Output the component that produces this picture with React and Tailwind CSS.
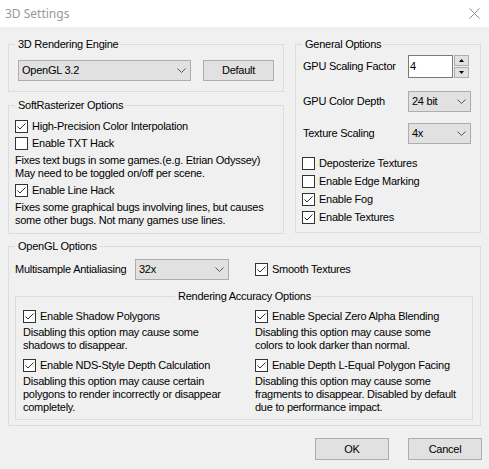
import React from 'react'

const font = { fontFamily: '"Liberation Sans", Arial, sans-serif' }

function Group({ label, center, className = '', children }) {
  return (
    <div className={`relative border border-[#dcdcdc] ${className}`}>
      <span
        className={`absolute -top-[7px] bg-[#f0f0f0] pl-[3px] pr-[2px] leading-[13px] whitespace-nowrap ${
          center ? 'left-1/2 -translate-x-1/2' : 'left-[6px]'
        }`}
      >
        {label}
      </span>
      {children}
    </div>
  )
}

function Check({ checked, label, h = 'h-[17px]' }) {
  return (
    <div className={`flex ${h} items-center`}>
      <span className="flex h-[13px] w-[13px] shrink-0 items-center justify-center border border-[#333333] bg-white">
        {checked && (
          <svg width="11" height="11" viewBox="0 0 11 11">
            <path d="M1.5 5.5 L4 8 L9.5 2.5" fill="none" stroke="#333333" strokeWidth="1" />
          </svg>
        )}
      </span>
      <span className="ml-[4px] whitespace-nowrap">{label}</span>
    </div>
  )
}

function Select({ value, className = '' }) {
  return (
    <div className={`flex h-[21px] items-center justify-between border border-[#adadad] bg-[#e1e1e1] pl-[3px] pr-[4px] ${className}`}>
      <span>{value}</span>
      <svg width="9" height="5" viewBox="0 0 9 5">
        <path d="M0.5 0.5 L4.5 4.5 L8.5 0.5" fill="none" stroke="#555555" strokeWidth="1" />
      </svg>
    </div>
  )
}

function Button({ children, className = '' }) {
  return (
    <div className={`flex items-center justify-center border border-[#adadad] bg-[#e1e1e1] ${className}`}>
      {children}
    </div>
  )
}

function Desc({ lines, className = '' }) {
  return (
    <div className={`leading-[13px] ${className}`}>
      {lines.map((l) => (
        <div key={l} className="whitespace-nowrap">{l}</div>
      ))}
    </div>
  )
}

export default function App() {
  return (
    <div className="h-[469px] w-[489px] overflow-hidden bg-[#f0f0f0] text-[11px] tracking-[-0.25px] text-black" style={font}>
      {/* title bar */}
      <div className="flex h-[27px] items-center bg-white pl-[5px]">
        <span className="text-[12px] tracking-normal text-[#999999]" style={{ fontFamily: '"Noto Sans", sans-serif' }}>
          3D Settings
        </span>
        <svg className="ml-auto mr-[9px]" width="11" height="11" viewBox="0 0 11 11">
          <path d="M0.5 0.5 L10.5 10.5 M10.5 0.5 L0.5 10.5" stroke="#8a8a8a" strokeWidth="1" />
        </svg>
      </div>

      <div className="pl-[8px] pt-[17px]">
        <div className="flex items-start">
          {/* left column */}
          <div className="w-[276px]">
            <Group label="3D Rendering Engine" className="h-[48px]">
              <div className="flex pl-[9px] pt-[15px]">
                <Select value="OpenGL 3.2" className="w-[173px]" />
                <Button className="ml-[12px] h-[21px] w-[71px]">Default</Button>
              </div>
            </Group>

            <Group label="SoftRasterizer Options" className="mt-[13px] h-[129px]">
              <div className="pl-[6px] pt-[12px]">
                <Check checked label="High-Precision Color Interpolation" />
                <Check label="Enable TXT Hack" />
                <Desc
                  className="py-[2px]"
                  lines={['Fixes text bugs in some games.(e.g. Etrian Odyssey)', 'May need to be toggled on/off per scene.']}
                />
                <Check checked label="Enable Line Hack" />
                <Desc
                  className="pt-[2px]"
                  lines={['Fixes some graphical bugs involving lines, but causes', 'some other bugs. Not many games use lines.']}
                />
              </div>
            </Group>
          </div>

          {/* right column */}
          <Group label="General Options" className="ml-[11px] h-[189px] w-[186px]">
            <div className="pl-[6px] pt-[10px]">
              <div className="flex h-[23px] items-center">
                <span className="w-[106px] pl-[1px]">GPU Scaling Factor</span>
                <div className="flex h-[23px] w-[45px] items-center border border-[#7a7a7a] bg-white pl-[1px]">4</div>
                <div className="ml-[1px] flex h-[23px] w-[15px] flex-col gap-[1px]">
                  <div className="flex h-[11px] items-center justify-center border border-[#adadad] bg-[#e1e1e1]">
                    <svg width="5" height="3" viewBox="0 0 5 3"><path d="M2.5 0 L5 3 L0 3 Z" fill="#000" /></svg>
                  </div>
                  <div className="flex h-[11px] items-center justify-center border border-[#adadad] bg-[#e1e1e1]">
                    <svg width="5" height="3" viewBox="0 0 5 3"><path d="M0 0 L5 0 L2.5 3 Z" fill="#000" /></svg>
                  </div>
                </div>
              </div>
              <div className="mt-[13px] flex items-center">
                <span className="w-[106px] pl-[1px]">GPU Color Depth</span>
                <Select value="24 bit" className="w-[63px]" />
              </div>
              <div className="mt-[11px] flex items-center">
                <span className="w-[106px] pl-[1px]">Texture Scaling</span>
                <Select value="4x" className="w-[63px]" />
              </div>
              <div className="mt-[10px]">
                <Check h="h-[18px]" label="Deposterize Textures" />
                <Check h="h-[18px]" label="Enable Edge Marking" />
                <Check h="h-[18px]" checked label="Enable Fog" />
                <Check h="h-[18px]" checked label="Enable Textures" />
              </div>
            </div>
          </Group>
        </div>

        {/* OpenGL options */}
        <Group label="OpenGL Options" className="mt-[12px] h-[180px] w-[473px]">
          <div className="pl-[6px] pt-[12px]">
            <div className="flex items-center">
              <span className="w-[120px]">Multisample Antialiasing</span>
              <Select value="32x" className="w-[94px]" />
              <div className="ml-[26px]">
                <Check checked label="Smooth Textures" />
              </div>
            </div>

            <Group label="Rendering Accuracy Options" center className="mt-[16px] h-[124px] w-[458px]">
              <div className="grid grid-cols-[232px_1fr] pl-[7px] pt-[11px]">
                <div>
                  <Check checked label="Enable Shadow Polygons" />
                  <Desc className="pt-[1px]" lines={['Disabling this option may cause some', 'shadows to disappear.']} />
                </div>
                <div>
                  <Check checked label="Enable Special Zero Alpha Blending" />
                  <Desc className="pt-[1px]" lines={['Disabling this option may cause some', 'colors to look darker than normal.']} />
                </div>
                <div className="mt-[5px]">
                  <Check checked label="Enable NDS-Style Depth Calculation" />
                  <Desc
                    className="pt-[1px]"
                    lines={['Disabling this option may cause certain', 'polygons to render incorrectly or disappear', 'completely.']}
                  />
                </div>
                <div className="mt-[5px]">
                  <Check checked label="Enable Depth L-Equal Polygon Facing" />
                  <Desc
                    className="pt-[1px]"
                    lines={['Disabling this option may cause some', 'fragments to disappear. Disabled by default', 'due to performance impact.']}
                  />
                </div>
              </div>
            </Group>
          </div>
        </Group>

        <div className="mt-[12px] flex justify-end gap-[19px] pr-[7px]">
          <Button className="h-[22px] w-[74px]">OK</Button>
          <Button className="h-[22px] w-[74px]">Cancel</Button>
        </div>
      </div>
    </div>
  )
}
